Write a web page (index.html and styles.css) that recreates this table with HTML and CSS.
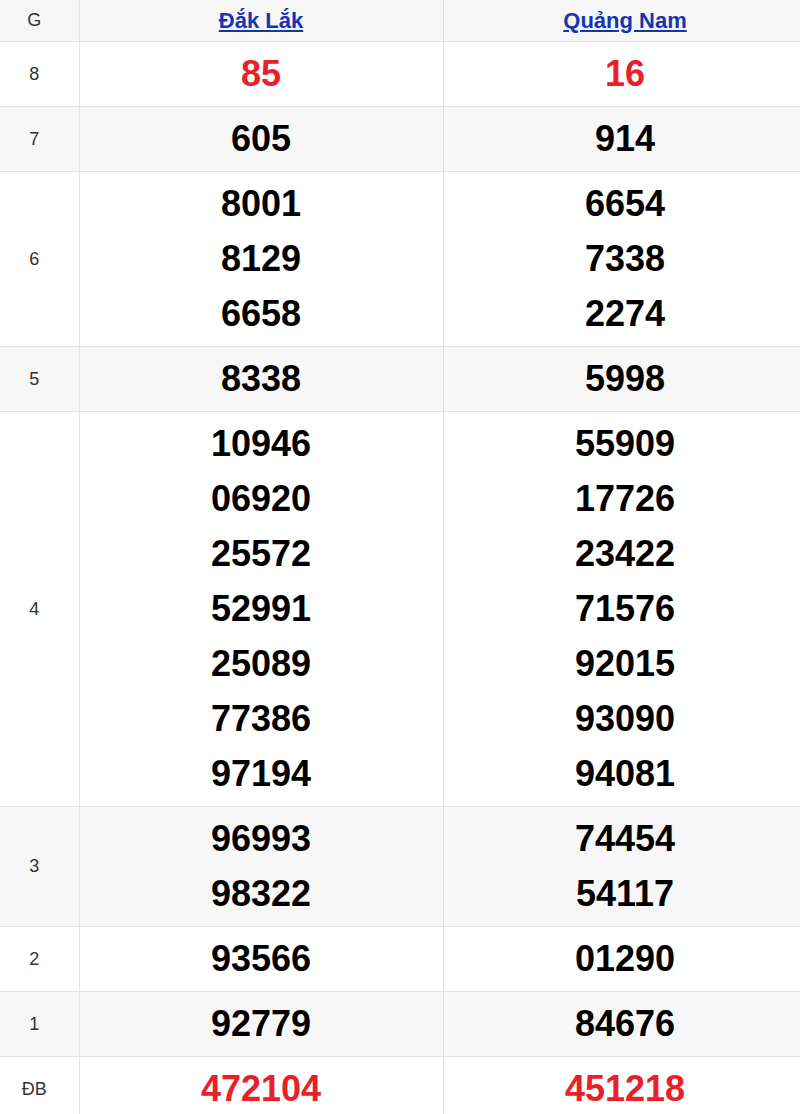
FILE: index.html
```html
<!DOCTYPE html>
<html lang="vi">
<head>
<meta charset="utf-8">
<link rel="stylesheet" href="styles.css">
</head>
<body>
<table class="kq">
  <colgroup><col class="c-g"><col class="c-p"><col class="c-p"></colgroup>
  <thead>
    <tr class="head">
      <th class="lbl">G</th>
      <th><a href="#">Đắk Lắk</a></th>
      <th><a href="#">Quảng Nam</a></th>
    </tr>
  </thead>
  <tbody>
    <tr><td class="lbl">8</td><td><div class="n red">85</div></td><td><div class="n red">16</div></td></tr>
    <tr class="alt"><td class="lbl">7</td><td><div class="n">605</div></td><td><div class="n">914</div></td></tr>
    <tr><td class="lbl">6</td>
      <td><div class="n">8001</div><div class="n">8129</div><div class="n">6658</div></td>
      <td><div class="n">6654</div><div class="n">7338</div><div class="n">2274</div></td></tr>
    <tr class="alt"><td class="lbl">5</td><td><div class="n">8338</div></td><td><div class="n">5998</div></td></tr>
    <tr><td class="lbl">4</td>
      <td><div class="n">10946</div><div class="n">06920</div><div class="n">25572</div><div class="n">52991</div><div class="n">25089</div><div class="n">77386</div><div class="n">97194</div></td>
      <td><div class="n">55909</div><div class="n">17726</div><div class="n">23422</div><div class="n">71576</div><div class="n">92015</div><div class="n">93090</div><div class="n">94081</div></td></tr>
    <tr class="alt"><td class="lbl">3</td>
      <td><div class="n">96993</div><div class="n">98322</div></td>
      <td><div class="n">74454</div><div class="n">54117</div></td></tr>
    <tr><td class="lbl">2</td><td><div class="n">93566</div></td><td><div class="n">01290</div></td></tr>
    <tr class="alt"><td class="lbl">1</td><td><div class="n">92779</div></td><td><div class="n">84676</div></td></tr>
    <tr><td class="lbl">ĐB</td><td><div class="n red">472104</div></td><td><div class="n red">451218</div></td></tr>
  </tbody>
</table>
</body>
</html>
```
FILE: styles.css
```css
html, body {
  margin: 0;
  padding: 0;
  background: #fff;
  overflow: hidden;
}
body {
  font-family: "Liberation Sans", Arial, sans-serif;
  width: 800px;
}
.kq {
  border-collapse: collapse;
  width: 807px;
  table-layout: fixed;
}
.c-g { width: 79px; }
.c-p { width: 364px; }
.kq th, .kq td {
  border: 1px solid #e2e3e8;
  text-align: center;
  vertical-align: middle;
  padding: 0;
}
.kq tr:first-child th { border-top: none; }
.kq th:first-child, .kq td:first-child { border-left: none; }
.head th {
  background: #f6f6f6;
  height: 41px;
  font-weight: bold;
  font-size: 22px;
}
.kq .lbl {
  font-weight: normal;
  font-size: 18px;
  color: #333;
  padding: 0 10px 0 0;
}
.head a {
  color: #1534b4;
  text-decoration: underline;
  text-underline-offset: 2px;
}
.kq td:not(.lbl) {
  padding: 4px 0 5px;
}
.alt td { background: #f7f7f7; }
.n {
  font-size: 36px;
  font-weight: bold;
  line-height: 55px;
  color: #000;
}
.n.red { color: #e8202a; }
```
